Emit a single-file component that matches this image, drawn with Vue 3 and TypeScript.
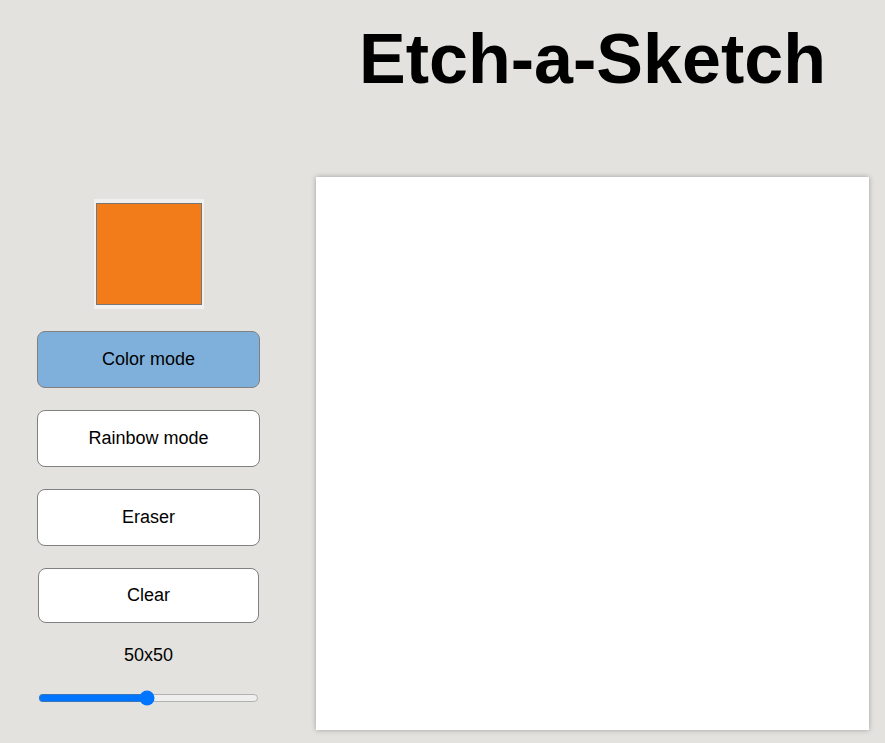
<script setup lang="ts">
import { ref } from 'vue'

type Mode = 'color' | 'rainbow' | 'eraser'

const modes: { id: Mode; label: string }[] = [
  { id: 'color', label: 'Color mode' },
  { id: 'rainbow', label: 'Rainbow mode' },
  { id: 'eraser', label: 'Eraser' },
]

const mode = ref<Mode>('color')
const color = ref('#f27b1a')
const size = ref(50)
const board = ref<HTMLCanvasElement | null>(null)
const drawing = ref(false)

function paint(event: PointerEvent) {
  const canvas = board.value
  const context = canvas?.getContext('2d')
  if (!drawing.value || !canvas || !context) return
  const box = canvas.getBoundingClientRect()
  const cell = canvas.width / size.value
  const column = Math.floor(((event.clientX - box.left) / box.width) * size.value)
  const row = Math.floor(((event.clientY - box.top) / box.height) * size.value)
  if (mode.value === 'eraser') context.fillStyle = '#ffffff'
  else if (mode.value === 'rainbow') context.fillStyle = `hsl(${Math.random() * 360}, 90%, 55%)`
  else context.fillStyle = color.value
  context.fillRect(column * cell, row * cell, cell, cell)
}

function start(event: PointerEvent) {
  drawing.value = true
  paint(event)
}

function clear() {
  const canvas = board.value
  canvas?.getContext('2d')?.clearRect(0, 0, canvas.width, canvas.height)
}
</script>

<template>
  <div class="page">
    <header class="header">
      <h1 class="title">Etch-a-Sketch</h1>
    </header>
    <aside class="controls">
      <input v-model="color" class="swatch" type="color" aria-label="Pen color" />
      <button
        v-for="item in modes"
        :key="item.id"
        type="button"
        class="button"
        :class="{ active: mode === item.id }"
        :aria-pressed="mode === item.id"
        @click="mode = item.id"
      >
        {{ item.label }}
      </button>
      <button type="button" class="button clear" @click="clear">Clear</button>
      <label class="size" for="grid-size">{{ size }}x{{ size }}</label>
      <input
        id="grid-size"
        v-model.number="size"
        class="slider"
        type="range"
        min="1"
        max="100"
        @change="clear"
      />
    </aside>
    <main class="stage">
      <canvas
        ref="board"
        class="board"
        width="1000"
        height="1000"
        @pointerdown="start"
        @pointermove="paint"
        @pointerup="drawing = false"
        @pointerleave="drawing = false"
      ></canvas>
    </main>
  </div>
</template>

<style>
body {
  background: #e3e2de;
}
</style>

<style scoped>
.page {
  display: grid;
  grid-template-columns: 223px minmax(0, 1fr);
  column-gap: 56px;
  padding: 16px 16px 13px 37px;
  font-family: Arial, "Liberation Sans", sans-serif;
  color: #000;
}

.header {
  grid-column: 2;
  height: 161px;
}

.title {
  margin: 0;
  font-size: 70px;
  line-height: 86px;
  font-weight: 700;
  text-align: center;
  white-space: nowrap;
}

.controls {
  grid-column: 1;
  display: flex;
  flex-direction: column;
  align-items: center;
  gap: 22px;
  padding-top: 22px;
}

.swatch {
  box-sizing: border-box;
  width: 110px;
  height: 110px;
  padding: 0;
  border: 0;
  background: #f0f0f0;
  cursor: pointer;
}

.button {
  box-sizing: border-box;
  width: 100%;
  height: 57px;
  padding: 0;
  border: 1px solid #808080;
  border-radius: 8px;
  background: #fff;
  font: 18px Arial, "Liberation Sans", sans-serif;
  color: #000;
  cursor: pointer;
}

.active {
  background: #7fb0dc;
}

.clear {
  width: 221px;
  height: 55px;
}

.size {
  font-size: 18px;
  line-height: 21px;
}

.slider {
  box-sizing: border-box;
  width: 221px;
  height: 16px;
  margin: 2px 0;
}

.stage {
  grid-column: 2;
}

.board {
  display: block;
  width: 100%;
  aspect-ratio: 1;
  background: #fff;
  box-shadow: 0 0 5px rgba(0, 0, 0, 0.3);
}
</style>
